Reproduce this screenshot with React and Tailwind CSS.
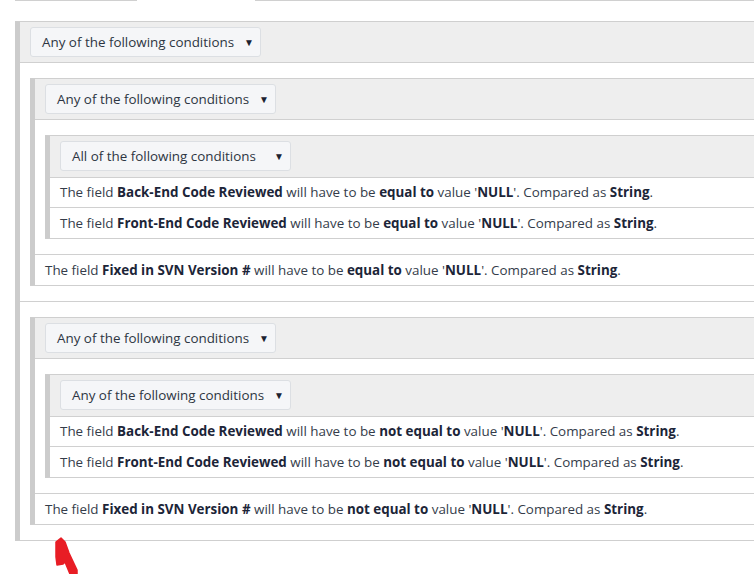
import { Fragment } from 'react';

const FONT = "font-['Open_Sans','Noto_Sans',sans-serif]";

// Condition tree: groups hold nested groups or plain field rules
const tree = [
  {
    mode: 'Any',
    items: [
      {
        mode: 'All',
        items: [
          { field: 'Back-End Code Reviewed', op: 'equal to' },
          { field: 'Front-End Code Reviewed', op: 'equal to' },
        ],
      },
      { field: 'Fixed in SVN Version #', op: 'equal to' },
    ],
  },
  {
    mode: 'Any',
    items: [
      {
        mode: 'Any',
        items: [
          { field: 'Back-End Code Reviewed', op: 'not equal to' },
          { field: 'Front-End Code Reviewed', op: 'not equal to' },
        ],
      },
      { field: 'Fixed in SVN Version #', op: 'not equal to' },
    ],
  },
];

const ModeSelect = ({ mode }) => (
  <div className="flex items-center justify-between w-[231px] h-[30px] pl-[11px] pr-[6px] bg-[#f5f6f8] border border-[#dcdfe3] rounded-[3px] text-[#2d3542]">
    <span>{mode} of the following conditions</span>
    <span className="text-[10px] text-[#1b2230] leading-none">▼</span>
  </div>
);

const RuleRow = ({ rule }) => (
  <div className="h-[30px] flex items-center px-[10px] whitespace-nowrap text-[#343c4a]">
    <span>
      The field <b className="font-bold text-[#1c2538]">{rule.field}</b> will have to be{' '}
      <b className="font-bold text-[#1c2538]">{rule.op}</b> value '
      <b className="font-bold text-[#1c2538]">NULL</b>'. Compared as{' '}
      <b className="font-bold text-[#1c2538]">String</b>.
    </span>
  </div>
);

const Group = ({ group, depth = 1 }) => (
  <div className="border border-[#cfcfcf] border-l-[5px] border-l-[#cccccc] bg-white">
    <div className={depth > 1 ? 'bg-[#eeeeee] px-[10px] pt-[5px] pb-[6px] border-b border-[#d0d0d0]' : 'bg-[#eeeeee] px-[10px] py-[5px] border-b border-[#d0d0d0]'}>
      <ModeSelect mode={group.mode} />
    </div>
    <div className="divide-y divide-[#d0d0d0]">
      {group.items.map((item, i) => (
        <Fragment key={i}>
          {item.items ? (
            <div className="px-[10px] py-[15px]">
              <Group group={item} depth={depth + 1} />
            </div>
          ) : (
            <RuleRow rule={item} />
          )}
        </Fragment>
      ))}
    </div>
  </div>
);

const RedArrow = () => (
  <svg className="absolute left-[54px] top-[537px]" width="26" height="37" viewBox="0 0 26 37">
    <polygon
      points="2,5 7,1 11,5 15,16 23,33 23,37 16,37 11,25 9,27 3,28 2,20"
      fill="#e81d25"
      stroke="#e81d25"
      strokeWidth="1.5"
      strokeLinejoin="round"
    />
  </svg>
);

export default function App() {
  return (
    <div className={`relative w-[754px] h-[574px] overflow-hidden bg-white text-[13.4px] ${FONT}`}>
      {/* tab strip bottom edge */}
      <div className="flex h-px">
        <div className="ml-[15px] w-[122px] bg-[#d0d0d0]" />
        <div className="w-[118px]" />
        <div className="flex-1 bg-[#d0d0d0]" />
      </div>

      <div className="ml-[15px] mt-[20px] w-[820px] border border-[#cfcfcf] border-l-[5px] border-l-[#cccccc]">
        <div className="bg-[#eeeeee] px-[10px] py-[5px] border-b border-[#d0d0d0]">
          <ModeSelect mode="Any" />
        </div>
        <div className="divide-y divide-[#d0d0d0]">
          {tree.map((g, i) => (
            <div key={i} className="px-[10px] py-[15px]">
              <Group group={g} />
            </div>
          ))}
        </div>
      </div>

      <RedArrow />
    </div>
  );
}
